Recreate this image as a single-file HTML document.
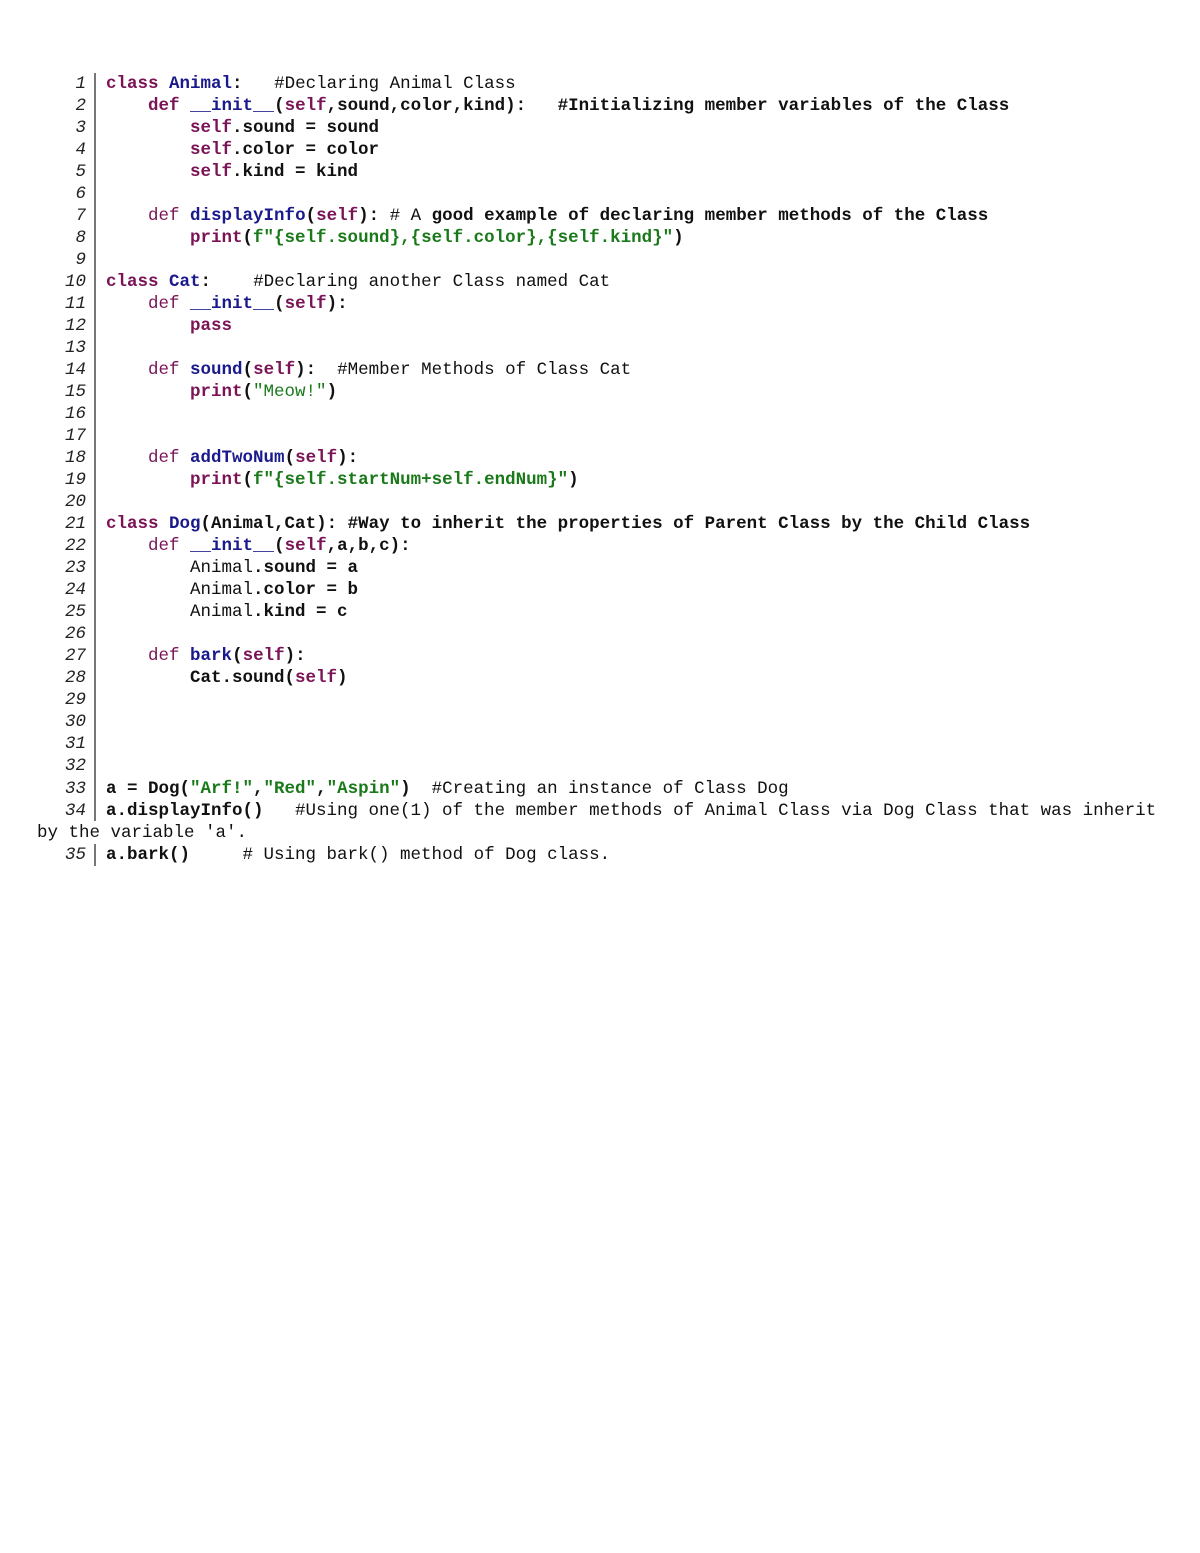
<!DOCTYPE html>
<html><head><meta charset="utf-8"><style>
body{margin:0;width:1200px;height:1553px;background:#fff;position:relative;overflow:hidden;font-family:"Liberation Mono",monospace;font-size:17.5px;color:#111}
.r{position:absolute;left:106px;height:22px;line-height:22px;white-space:pre;font-weight:bold}
.n{position:absolute;width:86px;left:0;text-align:right;font-style:italic;height:22px;line-height:22px;color:#222}
.bar{position:absolute;left:94px;width:2px;background:#777}
.k{color:#7a1456}.c{color:#1a1a8c}.s{color:#1a7a1a}.m{font-weight:normal}
</style></head><body>
<div class="bar" style="top:73px;height:748px"></div>
<div class="bar" style="top:844px;height:22px"></div>
<div class="n" style="top:73px">1</div><div class="r" style="top:73px"><span class="k">class</span> <span class="c">Animal</span>:   <span class="m">#Declaring Animal Class</span></div>
<div class="n" style="top:95px">2</div><div class="r" style="top:95px">    <span class="k">def</span> <span class="c">__init__</span>(<span class="k">self</span>,sound,color,kind):   #Initializing member variables of the Class</div>
<div class="n" style="top:117px">3</div><div class="r" style="top:117px">        <span class="k">self</span>.sound = sound</div>
<div class="n" style="top:139px">4</div><div class="r" style="top:139px">        <span class="k">self</span>.color = color</div>
<div class="n" style="top:161px">5</div><div class="r" style="top:161px">        <span class="k">self</span>.kind = kind</div>
<div class="n" style="top:183px">6</div>
<div class="n" style="top:205px">7</div><div class="r" style="top:205px">    <span class="k m">def</span> <span class="c">displayInfo</span>(<span class="k">self</span>): <span class="m"># A</span> good example of declaring member methods of the Class</div>
<div class="n" style="top:227px">8</div><div class="r" style="top:227px">        <span class="k">print</span>(<span class="s">f"{self.sound},{self.color},{self.kind}"</span>)</div>
<div class="n" style="top:249px">9</div>
<div class="n" style="top:271px">10</div><div class="r" style="top:271px"><span class="k">class</span> <span class="c">Cat</span>:    <span class="m">#Declaring another Class named Cat</span></div>
<div class="n" style="top:293px">11</div><div class="r" style="top:293px">    <span class="k m">def</span> <span class="c">__init__</span>(<span class="k">self</span>):</div>
<div class="n" style="top:315px">12</div><div class="r" style="top:315px">        <span class="k">pass</span></div>
<div class="n" style="top:337px">13</div>
<div class="n" style="top:359px">14</div><div class="r" style="top:359px">    <span class="k m">def</span> <span class="c">sound</span>(<span class="k">self</span>):  <span class="m">#Member Methods of Class Cat</span></div>
<div class="n" style="top:381px">15</div><div class="r" style="top:381px">        <span class="k">print</span>(<span class="s m">"Meow!"</span>)</div>
<div class="n" style="top:403px">16</div>
<div class="n" style="top:425px">17</div>
<div class="n" style="top:447px">18</div><div class="r" style="top:447px">    <span class="k m">def</span> <span class="c">addTwoNum</span>(<span class="k">self</span>):</div>
<div class="n" style="top:469px">19</div><div class="r" style="top:469px">        <span class="k">print</span>(<span class="s">f"{self.startNum+self.endNum}"</span>)</div>
<div class="n" style="top:491px">20</div>
<div class="n" style="top:513px">21</div><div class="r" style="top:513px"><span class="k">class</span> <span class="c">Dog</span>(Animal,Cat): #Way to inherit the properties of Parent Class by the Child Class</div>
<div class="n" style="top:535px">22</div><div class="r" style="top:535px">    <span class="k m">def</span> <span class="c">__init__</span>(<span class="k">self</span>,a,b,c):</div>
<div class="n" style="top:557px">23</div><div class="r" style="top:557px">        <span class="m">Animal</span>.sound = a</div>
<div class="n" style="top:579px">24</div><div class="r" style="top:579px">        <span class="m">Animal</span>.color = b</div>
<div class="n" style="top:601px">25</div><div class="r" style="top:601px">        <span class="m">Animal</span>.kind = c</div>
<div class="n" style="top:623px">26</div>
<div class="n" style="top:645px">27</div><div class="r" style="top:645px">    <span class="k m">def</span> <span class="c">bark</span>(<span class="k">self</span>):</div>
<div class="n" style="top:667px">28</div><div class="r" style="top:667px">        Cat.sound(<span class="k">self</span>)</div>
<div class="n" style="top:689px">29</div>
<div class="n" style="top:711px">30</div>
<div class="n" style="top:733px">31</div>
<div class="n" style="top:755px">32</div>
<div class="n" style="top:778px">33</div><div class="r" style="top:778px">a = Dog(<span class="s">"Arf!"</span>,<span class="s">"Red"</span>,<span class="s">"Aspin"</span>)  <span class="m">#Creating an instance of Class Dog</span></div>
<div class="n" style="top:800px">34</div><div class="r" style="top:800px">a.displayInfo()   <span class="m">#Using one(1) of the member methods of Animal Class via Dog Class that was inherit</span></div>
<div class="r m" style="top:822px;left:37px;font-weight:normal">by the variable 'a'.</div>
<div class="n" style="top:844px">35</div><div class="r" style="top:844px">a.bark()     <span class="m"># Using bark() method of Dog class.</span></div>
</body></html>
